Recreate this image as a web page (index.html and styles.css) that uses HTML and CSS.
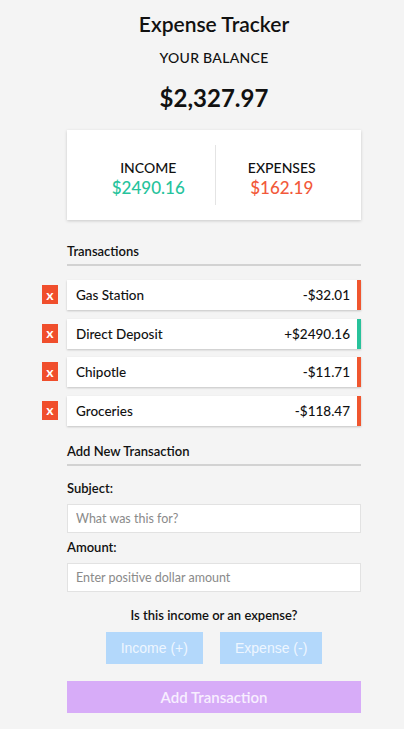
FILE: index.html
```html
<!DOCTYPE html>
<html>
<head>
<meta charset="utf-8">
<link rel="stylesheet" href="styles.css">
</head>
<body>
<div class="app">
  <h1 class="title">Expense Tracker</h1>
  <h2 class="balance-label">YOUR BALANCE</h2>
  <div class="balance">$2,327.97</div>

  <div class="summary">
    <div class="summary-col">
      <div class="summary-label">INCOME</div>
      <div class="summary-value income">$2490.16</div>
    </div>
    <div class="summary-divider"></div>
    <div class="summary-col">
      <div class="summary-label">EXPENSES</div>
      <div class="summary-value expense">$162.19</div>
    </div>
  </div>

  <h3 class="section-title">Transactions</h3>
  <ul class="list">
    <li class="item minus"><button class="delete">x</button><span>Gas Station</span><span>-$32.01</span></li>
    <li class="item plus"><button class="delete">x</button><span>Direct Deposit</span><span>+$2490.16</span></li>
    <li class="item minus"><button class="delete">x</button><span>Chipotle</span><span>-$11.71</span></li>
    <li class="item minus"><button class="delete">x</button><span>Groceries</span><span>-$118.47</span></li>
  </ul>

  <h3 class="section-title add-title">Add New Transaction</h3>
  <form class="form">
    <label class="field-label">Subject:</label>
    <input class="field" type="text" placeholder="What was this for?">
    <label class="field-label">Amount:</label>
    <input class="field" type="text" placeholder="Enter positive dollar amount">
    <div class="question">Is this income or an expense?</div>
    <div class="type-buttons">
      <button type="button" class="type-btn">Income (+)</button>
      <button type="button" class="type-btn">Expense (-)</button>
    </div>
    <button type="button" class="submit">Add Transaction</button>
  </form>
</div>
</body>
</html>
```

FILE: styles.css
```css
* { box-sizing: border-box; }
body {
  margin: 0;
  background: #f4f4f4;
  font-family: "Lato", "Open Sans", sans-serif;
  color: #111;
}
.app {
  width: 294px;
  margin-left: 67px;
  padding-top: 10px;
}
.title {
  margin: 0;
  text-align: center;
  font-size: 21px;
  font-weight: 600;
  line-height: 28px;
}
.balance-label {
  margin: 11px 0 0;
  text-align: center;
  font-size: 14px;
  font-weight: 500;
  line-height: 18px;
  letter-spacing: 0.3px;
}
.balance {
  margin-top: 15px;
  text-align: center;
  font-size: 24px;
  font-weight: 700;
  line-height: 32px;
}
.summary {
  margin-top: 16px;
  background: #fff;
  height: 90px;
  box-shadow: 0 1px 3px rgba(0,0,0,0.18);
  display: flex;
  align-items: center;
  padding: 15px 13px 15px 15px;
}
.summary-col {
  flex: 1;
  text-align: center;
  padding-top: 7px;
}
.summary-divider {
  width: 1px;
  align-self: stretch;
  background: #e4e4e4;
}
.summary-label {
  font-size: 14px;
  font-weight: 500;
  line-height: 18px;
}
.summary-value {
  font-size: 17px;
  font-weight: 500;
  line-height: 22px;
}
.income { color: #26c39c; }
.expense { color: #f2593a; }
.section-title {
  margin: 20px 0 0;
  font-size: 13px;
  font-weight: 600;
  line-height: 22px;
  padding-bottom: 2px;
  border-bottom: 2px solid #d2d2d2;
}
.list {
  list-style: none;
  margin: 14px 0 0;
  padding: 0;
  display: flex;
  flex-direction: column;
  gap: 8.5px;
}
.item {
  position: relative;
  height: 30px;
  background: #fff;
  display: flex;
  justify-content: space-between;
  align-items: center;
  padding: 0 7px 0 9px;
  font-size: 13.5px;
  font-weight: 500;
  box-shadow: 0 1px 2px rgba(0,0,0,0.2);
}
.item.minus { border-right: 4px solid #f0562f; }
.item.plus { border-right: 4px solid #28c29b; }
.delete {
  position: absolute;
  left: -25px;
  top: 5px;
  width: 16px;
  height: 19px;
  border: none;
  padding: 0;
  background: #f04e2c;
  color: #fff;
  font-family: "Lato", sans-serif;
  font-size: 14px;
  font-weight: 700;
  line-height: 18px;
}
.add-title { margin-top: 14px; }
.form {
  display: flex;
  flex-direction: column;
  margin-top: 13px;
}
.field-label {
  font-size: 13px;
  font-weight: 600;
  line-height: 18px;
}
.field {
  margin: 7px 0 5px;
  height: 29px;
  border: 1px solid #e2e2e2;
  background: #fff;
  padding: 0 8px;
  font-family: "Lato", sans-serif;
  font-size: 12.5px;
}
.field::placeholder { color: #8a8a8a; }
.question {
  margin-top: 9px;
  text-align: center;
  font-size: 13px;
  font-weight: 600;
  line-height: 18px;
}
.type-buttons {
  display: flex;
  justify-content: center;
  gap: 17px;
  margin-top: 8px;
}
.type-btn {
  height: 32px;
  border: none;
  background: #b3d8fb;
  color: #eef6ff;
  font-family: "Liberation Sans", Arial, sans-serif;
  font-size: 14px;
  padding: 0 15px;
}
.submit {
  margin-top: 17px;
  height: 32px;
  border: none;
  background: #d7acf8;
  color: #f7efff;
  font-family: "Lato", sans-serif;
  font-size: 15px;
  font-weight: 600;
}
```
